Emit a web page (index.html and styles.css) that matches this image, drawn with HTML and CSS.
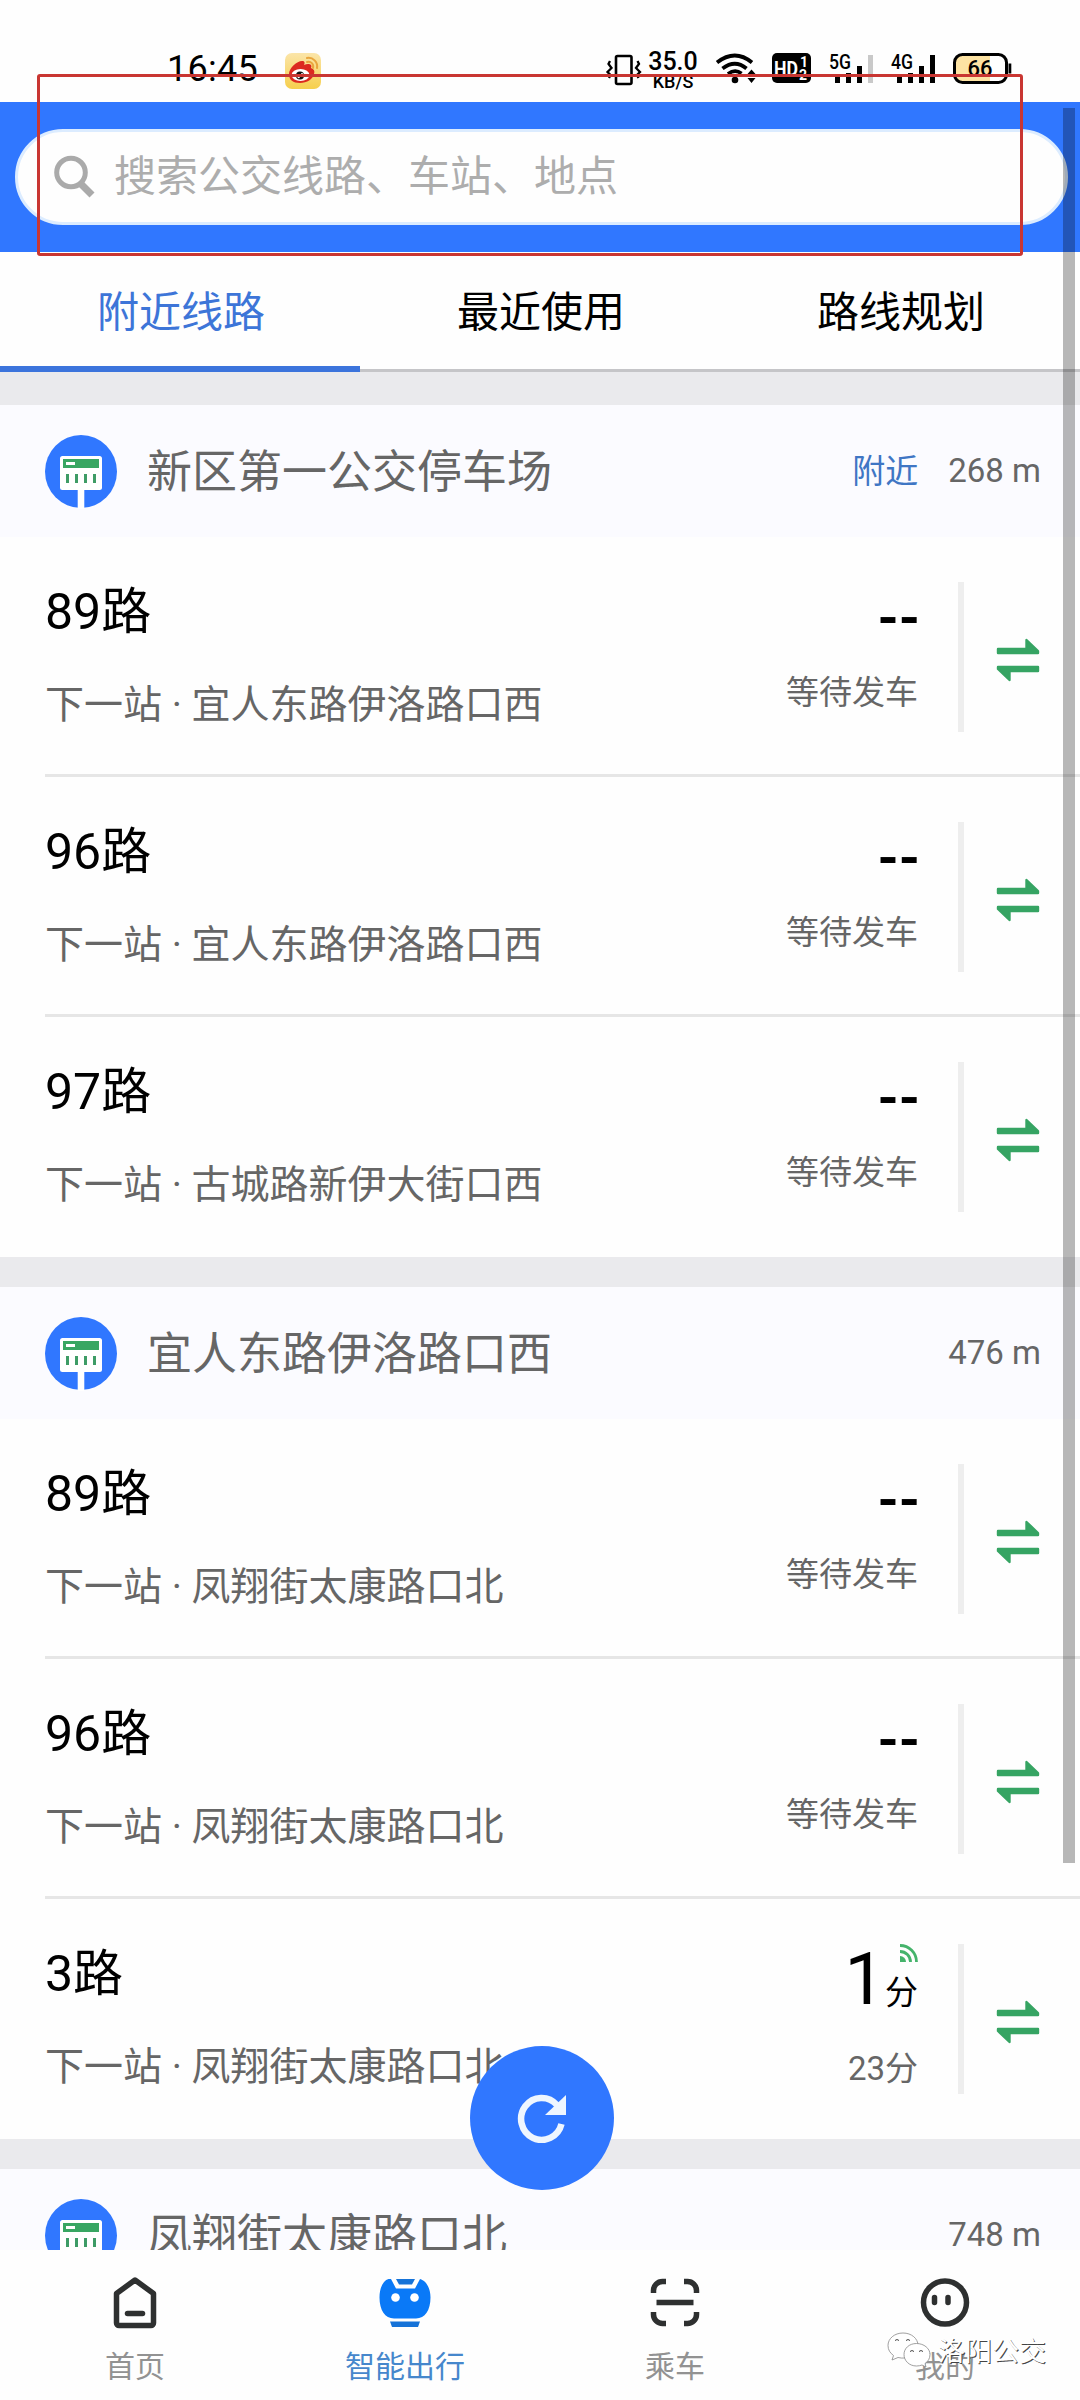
FILE: index.html
```html
<!DOCTYPE html>
<html lang="zh-CN">
<head>
<meta charset="utf-8">
<title>智能出行</title>
<link rel="stylesheet" href="styles.css">
</head>
<body>
<svg class="defs" aria-hidden="true">
  <symbol id="stop" viewBox="0 0 72 74">
    <ellipse cx="36" cy="36.5" rx="36" ry="36.5" fill="#3077ff"/>
    <rect x="15" y="21" width="42" height="34" rx="2.5" fill="#fff"/>
    <path d="M32.7 54h6.6v20h-6.6z" fill="#fff"/>
    <path d="M18 24h36v9H18z" fill="#38a662"/>
    <path d="M21 27h9v3h-9z" fill="#fff"/>
    <path d="M22.5 39v9M31.5 39v9M40.5 39v9M49.5 39v9" stroke="#3e9c66" stroke-width="3"/>
  </symbol>
  <symbol id="swap" viewBox="0 0 44 44">
    <path d="M2 11H30.500V2L42 13V15H2zM42 33H13.500V42L2 31V29H42z" fill="#36a463" stroke="#36a463" stroke-width="2.400" stroke-linejoin="round"/>
  </symbol>
</svg>
<div class="app">
  <header class="status">
    <span class="clock">16:45</span>
    <svg class="weibo" viewBox="0 0 36 36">
      <defs><linearGradient id="wb" x1="0" y1="0" x2="0" y2="1"><stop offset="0" stop-color="#fbe5a9"/><stop offset="1" stop-color="#f6cf4c"/></linearGradient></defs>
      <rect width="36" height="36" rx="7" fill="url(#wb)"/>
      <path d="M4 21C4 15 12 8 17 8c3 0 3 2 2 4 4-2 9-1 7 3 3 1 4 3 3 6-1 5-7 9-14 9S4 27 4 21z" fill="#dc2a20"/>
      <ellipse cx="15.500" cy="22" rx="9" ry="6" fill="#fff"/>
      <circle cx="15" cy="22.500" r="4" fill="#111"/><circle cx="13.700" cy="24" r="1.200" fill="#fff"/><circle cx="17" cy="21" r="1" fill="#fff"/>
      <path d="M22 9c4-1 7 2 6 6M22 5c6-1 11 4 10 10" fill="none" stroke="#e9a53d" stroke-width="2" stroke-linecap="round"/>
    </svg>
    <div class="indicators">
      <svg class="vibrate" viewBox="0 0 36 32">
        <rect x="10" y="2" width="15.500" height="28" rx="1.500" fill="none" stroke="#000" stroke-width="2.600"/>
        <path d="M4 7l-1.500 3 3 4-4 4 3 3-1.500 3M31.500 7l1.500 3-3 4 4 4-3 3 1.500 3" fill="none" stroke="#000" stroke-width="2.300"/>
      </svg>
      <div class="speed"><span class="speed-value">35.0</span><span class="speed-unit">KB/S</span></div>
      <svg class="wifi" viewBox="0 0 40 32">
        <path d="M1 9.500Q19 -4.500 36 9.500M6.500 15.500Q19 6 30.500 15.500M12 21Q19 15.500 25.500 20.500" fill="none" stroke="#000" stroke-width="3.800"/>
        <circle cx="19" cy="27" r="3.300"/>
        <path d="M31.500 21l4-4.500 4 4.500zM31.500 25l4 5 4-5z"/>
      </svg>
      <svg class="hd" viewBox="0 0 39 30">
        <rect width="39" height="30" rx="5"/>
        <text x="2" y="22.500" class="hd-main" textLength="24" lengthAdjust="spacingAndGlyphs">HD</text>
        <text x="28" y="13.500" class="hd-sub">1</text><text x="27" y="26.500" class="hd-sub">2</text>
      </svg>
      <svg class="signal" viewBox="0 0 44 32">
        <text x="0" y="15.500" class="net" textLength="22" lengthAdjust="spacingAndGlyphs">5G</text>
        <path d="M8.500 24v6M19.500 20v10M30.500 13v17" stroke="#000" stroke-width="5"/>
        <path d="M41.500 2v28" stroke="#c9c9c9" stroke-width="5"/>
      </svg>
      <svg class="signal" viewBox="0 0 44 32">
        <text x="0" y="15.500" class="net" textLength="22" lengthAdjust="spacingAndGlyphs">4G</text>
        <path d="M8.500 24v6M19.500 20v10M30.500 13v17M41.500 2v28" stroke="#000" stroke-width="5"/>
      </svg>
      <svg class="battery" viewBox="0 0 59 31">
        <rect x="1.500" y="1.500" width="52" height="28" rx="8" fill="#fff"/>
        <path d="M9.500 1.500H37v28H9.500a8 8 0 0 1-8-8v-12a8 8 0 0 1 8-8z" fill="#fde3a3"/>
        <rect x="1.500" y="1.500" width="52" height="28" rx="8" fill="none" stroke="#000" stroke-width="3"/>
        <rect x="55.500" y="10.500" width="2.800" height="10"/>
        <text x="14.500" y="23" class="pct">66</text>
      </svg>
    </div>
  </header>

  <div class="searchbar">
    <div class="search">
      <svg class="lens" viewBox="0 0 42 44"><circle cx="17" cy="17.500" r="14.300" fill="none" stroke="#aaa" stroke-width="5"/><path d="M27 29l11 11" stroke="#aaa" stroke-width="7"/></svg>
      <span>搜索公交线路、车站、地点</span>
    </div>
  </div>

  <nav class="tabs">
    <a class="tab active">附近线路</a><a class="tab">最近使用</a><a class="tab">路线规划</a>
  </nav>

  <main class="list">
    <section class="station">
      <div class="head"><svg class="stop"><use href="#stop"/></svg><h2>新区第一公交停车场</h2><span class="near">附近</span><span class="dist">268 m</span></div>
      <div class="row"><div class="line"><h3>89路</h3><p>下一站 · 宜人东路伊洛路口西</p></div><div class="eta"><b>--</b><span>等待发车</span></div><svg class="swap"><use href="#swap"/></svg></div>
      <div class="row"><div class="line"><h3>96路</h3><p>下一站 · 宜人东路伊洛路口西</p></div><div class="eta"><b>--</b><span>等待发车</span></div><svg class="swap"><use href="#swap"/></svg></div>
      <div class="row"><div class="line"><h3>97路</h3><p>下一站 · 古城路新伊大街口西</p></div><div class="eta"><b>--</b><span>等待发车</span></div><svg class="swap"><use href="#swap"/></svg></div>
    </section>
    <section class="station">
      <div class="head"><svg class="stop"><use href="#stop"/></svg><h2>宜人东路伊洛路口西</h2><span class="dist">476 m</span></div>
      <div class="row"><div class="line"><h3>89路</h3><p>下一站 · 凤翔街太康路口北</p></div><div class="eta"><b>--</b><span>等待发车</span></div><svg class="swap"><use href="#swap"/></svg></div>
      <div class="row"><div class="line"><h3>96路</h3><p>下一站 · 凤翔街太康路口北</p></div><div class="eta"><b>--</b><span>等待发车</span></div><svg class="swap"><use href="#swap"/></svg></div>
      <div class="row"><div class="line"><h3>3路</h3><p>下一站 · 凤翔街太康路口北</p></div>
        <div class="eta live">
          <div class="arrive"><strong>1</strong><div class="unit"><svg class="rss" viewBox="0 0 18 18"><path d="M0 12a6 6 0 0 1 6 6H0z" fill="#45b36b"/><path d="M0 7.500A10.500 10.500 0 0 1 10.500 18M0 1.500A16.500 16.500 0 0 1 16.500 18" fill="none" stroke="#45b36b" stroke-width="2.800"/></svg><span>分</span></div></div>
          <span>23分</span>
        </div><svg class="swap"><use href="#swap"/></svg></div>
    </section>
    <section class="station">
      <div class="head"><svg class="stop"><use href="#stop"/></svg><h2>凤翔街太康路口北</h2><span class="dist">748 m</span></div>
    </section>
  </main>

  <nav class="bottom">
    <a class="item"><svg viewBox="0 0 54 54"><path d="M27 5L45.500 18.500V48a2.500 2.500 0 0 1-2.500 2.500H11A2.500 2.500 0 0 1 8.500 48V18.500z" fill="none" stroke="#2e3030" stroke-width="5.500" stroke-linejoin="round"/><path d="M19.500 38.500h15" stroke="#2e3030" stroke-width="5.500" stroke-linecap="round"/></svg><span>首页</span></a>
    <a class="item on"><svg viewBox="0 0 54 54"><path d="M10.500 4H13l5 9.500h19L42 4c6 1.500 10.500 9 10.500 18.500C52.500 35 47 43.500 38 43.500H16C7 43.500 1.500 35 1.500 22.500 1.500 12 5.500 5.500 10.500 4z" fill="#0a79f7"/><path d="M18 4h19l-3 5.500H21z" fill="#1673d8"/><circle cx="17.500" cy="22.500" r="4.300" fill="#fff"/><circle cx="36.500" cy="22.500" r="4.300" fill="#fff"/><path d="M12 46.500h30l-2 5.500H14z" fill="#1673d8"/></svg><span>智能出行</span></a>
    <a class="item"><svg viewBox="0 0 54 54"><path d="M5.500 18v-2.500a9 9 0 0 1 9-9H18M36 6.500h3.500a9 9 0 0 1 9 9V18M5.500 37v2.500a9 9 0 0 0 9 9H18M36 48.500h3.500a9 9 0 0 0 9-9V37M8.500 27.500h37" fill="none" stroke="#2e3030" stroke-width="5.500"/></svg><span>乘车</span></a>
    <a class="item"><svg viewBox="0 0 54 54"><circle cx="27" cy="27.500" r="21.500" fill="none" stroke="#2e3030" stroke-width="5.500"/><path d="M16.500 22.500v5M30 22.500v5" stroke="#2e3030" stroke-width="5.500" stroke-linecap="round"/></svg><span>我的</span></a>
  </nav>

  <button class="refresh" aria-label="刷新"><svg viewBox="0 0 50 50"><path d="M40 12A20.500 21 0 1 0 44.500 31" fill="none" stroke="#eef6ff" stroke-width="6.500"/><path d="M49 2v20H28z" fill="#eef6ff"/></svg></button>
  <div class="scrollbar"></div>
  <div class="highlight"></div>
  <div class="watermark">
    <svg viewBox="0 0 44 36"><g fill="#fff" stroke="#888" stroke-width=".8"><path d="M16 1C7.500 1 1 6.500 1 13.500c0 4.500 2.200 7.500 5.500 10L5 28l6-2.500c10 2.500 20-3 20-12C31 6.500 24.500 1 16 1z"/><path d="M29.500 11.500C22 11.500 17 16.500 17 22.500s5 11.500 12.500 11.500c2 0 4-.4 5.500-1l4 2-1-3.500c3-2 5-5 5-9 0-6-6-11-13.500-11z"/></g><path d="M8 8.500q2-2 4 0M19 8.500q2-2 4 0M23 19.500q2-2 4 0M32 19.500q2-2 4 0" fill="none" stroke="#444"/></svg>
    <span>洛阳公交</span>
  </div>
</div>
</body>
</html>
```
FILE: styles.css
```css
* { box-sizing: border-box; margin: 0; padding: 0; }
body { background: #fefefe; font-family: Roboto, "Noto Sans CJK SC", sans-serif; color: #000; }
.defs { display: none; }
.app { position: relative; width: 1080px; height: 2400px; overflow: hidden; display: flex; flex-direction: column; }

.status { height: 102px; flex: none; padding: 53px 68px 0 167px; display: flex; align-items: flex-start; }
.status svg { overflow: visible; }
.clock { font-size: 36px; line-height: 32px; width: 118px; letter-spacing: .3px; }
.weibo { width: 36px; height: 36px; }
.indicators { margin-left: auto; display: flex; align-items: flex-start; }
.vibrate { width: 36px; height: 32px; margin-top: 1px; }
.speed { width: 50px; margin-left: 6px; display: flex; flex-direction: column; align-items: center; font-weight: 500; }
.speed-value { font-size: 25px; line-height: 18px; }
.speed-unit { font-size: 18px; line-height: 21px; }
.wifi { width: 40px; height: 32px; margin-left: 18px; }
.hd { width: 39px; height: 30px; margin-left: 16px; }
.hd-main { font-size: 21px; font-weight: 700; fill: #fff; }
.hd-sub { font-size: 14px; font-weight: 700; fill: #fff; }
.signal { width: 44px; height: 32px; margin-left: 18px; }
.net { font-size: 20px; font-weight: 500; }
.battery { width: 59px; height: 31px; margin-left: 18px; }
.pct { font-size: 22px; font-weight: 500; }

.searchbar { height: 150px; flex: none; background: #3077ff; padding: 27px 12px 27px 15px; }
.search { height: 96px; border: 3px solid #dcecff; border-radius: 48px; background: #fefefe; padding: 0 36px; display: flex; align-items: center; gap: 18px; font-size: 42px; line-height: 60px; color: #adadad; }
.lens { width: 42px; height: 44px; }

.tabs { height: 120px; flex: none; display: flex; border-bottom: 3px solid #c5c5c8; }
.tab { flex: 1; height: 120px; display: flex; align-items: center; justify-content: center; font-size: 42px; padding: 0 0 8px 2px; }
.tab.active { color: #3d75d8; border-bottom: 6px solid #3c74dc; padding-bottom: 2px; }

.list { flex: 1; min-height: 0; overflow: hidden; background: #eaeaed; padding-top: 33px; display: flex; flex-direction: column; gap: 30px; }
.station { flex: none; background: #fefefe; }
.head { height: 132px; background: #fbfbff; padding: 1px 39px 0 45px; display: flex; align-items: center; color: #666; }
.stop { width: 72px; height: 74px; flex: none; margin-right: 30px; }
h2 { font-size: 45px; font-weight: 400; line-height: 60px; padding-top: 2px; flex: 1; }
.near, .dist { font-size: 33px; line-height: 44px; }
.dist { margin-top: -2px; }
.near { color: #3f76c4; margin-right: 30px; }

.row { height: 240px; display: flex; align-items: flex-start; margin-left: 45px; padding-right: 40px; border-bottom: 3px solid #e6e6e6; }
.row:last-child { border-bottom-color: transparent; }
.line { flex: 1; padding-top: 41px; }
h3 { font-size: 50px; font-weight: 400; line-height: 68px; }
p { font-size: 39px; line-height: 56px; margin-top: 31px; color: #666; }
.eta { margin-top: 45px; height: 150px; padding-right: 40px; border-right: 6px solid #eee; display: flex; flex-direction: column; align-items: flex-end; font-size: 33px; line-height: 44px; color: #666; }
.eta b { font-size: 54px; line-height: 60px; height: 89px; padding-top: 6px; margin-right: -2px; color: #000; }
.arrive { height: 103px; display: flex; align-items: flex-start; color: #000; }
.arrive strong { font-size: 72px; font-weight: 400; line-height: 72px; }
.unit { width: 33px; display: flex; flex-direction: column; }
.rss { width: 18px; height: 18px; margin-left: 15px; margin-bottom: 9px; }
.swap { width: 44px; height: 44px; flex: none; margin: 101px 0 0 32px; }

.bottom { height: 150px; flex: none; background: #fefefe; display: flex; }
.item { flex: 1; display: flex; flex-direction: column; align-items: center; padding-top: 25px; font-size: 30px; line-height: 40px; color: #929292; }
.item svg { width: 54px; height: 54px; margin-bottom: 18px; }
.item.on { color: #4687cc; }

.refresh { position: absolute; left: 470px; top: 2046px; width: 144px; height: 144px; border: 0; border-radius: 50%; background: #3077ff; display: flex; align-items: center; justify-content: center; }
.refresh svg { width: 50px; height: 50px; }
.scrollbar { position: absolute; left: 1063px; top: 108px; width: 12px; height: 1755px; background: rgba(0, 0, 0, .28); }
.highlight { position: absolute; left: 37px; top: 74px; width: 986px; height: 182px; border: 3px solid #c93632; border-radius: 3px; }
.watermark { position: absolute; left: 887px; top: 2332px; display: flex; align-items: flex-start; gap: 7px; color: #fff; font-size: 27px; line-height: 40px; text-shadow: 1px 1px 0 #444; }
.watermark svg { width: 44px; height: 36px; }
```
